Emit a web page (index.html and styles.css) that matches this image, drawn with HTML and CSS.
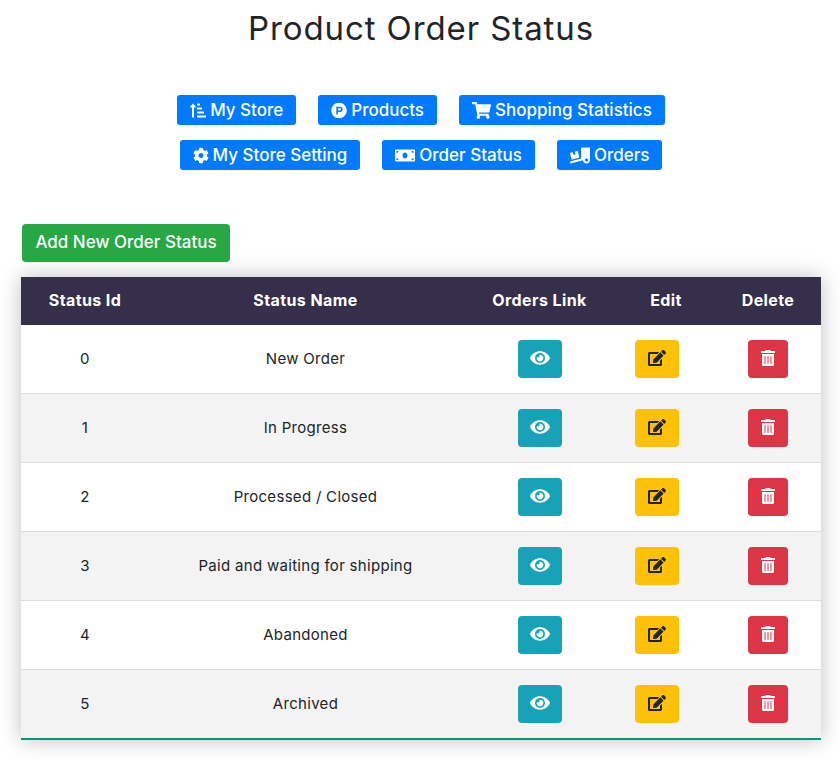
FILE: index.html
```html
<!DOCTYPE html>
<html lang="en">

<head>
    <meta charset="UTF-8">
    <meta name="viewport" content="width=device-width,initial-scale=1.0">
    <title>Product Order Status</title>
    <link rel="stylesheet" href="styles.css">
</head>

<body>
    <svg class="icon-defs" width="0" height="0">
        <symbol id="i-eye" viewBox="0 0 576 512"><path d="M572.52 241.4C518.29 135.59 410.93 64 288 64S57.68 135.64 3.48 241.41a32.35 32.35 0 0 0 0 29.19C57.71 376.41 165.07 448 288 448s230.32-71.64 284.52-177.41a32.35 32.35 0 0 0 0-29.19zM288 400a144 144 0 1 1 144-144 143.93 143.93 0 0 1-144 144zm0-240a95.31 95.31 0 0 0-25.31 3.79 47.85 47.85 0 0 1-66.9 66.9A95.78 95.78 0 1 0 288 160z"/></symbol>
        <symbol id="i-edit" viewBox="0 0 576 512"><path d="M402.6 83.2l90.2 90.2c3.8 3.8 3.8 10 0 13.8L274.4 405.6l-92.8 10.3c-12.4 1.4-22.9-9.1-21.5-21.5l10.3-92.8L388.8 83.2c3.8-3.8 10-3.8 13.8 0zm162-22.9l-48.8-48.8c-15.2-15.2-39.9-15.2-55.2 0l-35.4 35.4c-3.8 3.8-3.8 10 0 13.8l90.2 90.2c3.8 3.8 10 3.8 13.8 0l35.4-35.4c15.2-15.3 15.2-40 0-55.2zM384 346.2V448H64V128h229.8c3.2 0 6.2-1.3 8.5-3.5l40-40c7.6-7.6 2.2-20.5-8.5-20.5H48C21.5 64 0 85.5 0 112v352c0 26.5 21.5 48 48 48h352c26.5 0 48-21.5 48-48V306.2c0-10.7-12.9-16-20.5-8.5l-40 40c-2.2 2.3-3.5 5.3-3.5 8.5z"/></symbol>
        <symbol id="i-trash" viewBox="0 0 448 512"><path d="M32 464a48 48 0 0 0 48 48h288a48 48 0 0 0 48-48V128H32zm272-256a16 16 0 0 1 32 0v224a16 16 0 0 1-32 0zm-96 0a16 16 0 0 1 32 0v224a16 16 0 0 1-32 0zm-96 0a16 16 0 0 1 32 0v224a16 16 0 0 1-32 0zM432 32H312l-9.4-18.7A24 24 0 0 0 281.1 0H166.8a23.72 23.72 0 0 0-21.4 13.3L136 32H16A16 16 0 0 0 0 48v32a16 16 0 0 0 16 16h416a16 16 0 0 0 16-16V48a16 16 0 0 0-16-16z"/></symbol>
    </svg>

    <div class="page">
        <h1 class="page-title">Product Order Status</h1>

        <!-- Store menu -->
        <div class="store-menu">
            <div class="menu-row">
                <a class="menu-btn" href="#">
                    <svg class="menu-icon" viewBox="0 0 512 512"><path d="M240 96h64a16 16 0 0 0 16-16V48a16 16 0 0 0-16-16h-64a16 16 0 0 0-16 16v32a16 16 0 0 0 16 16zm0 128h128a16 16 0 0 0 16-16v-32a16 16 0 0 0-16-16H240a16 16 0 0 0-16 16v32a16 16 0 0 0 16 16zm256 192H240a16 16 0 0 0-16 16v32a16 16 0 0 0 16 16h256a16 16 0 0 0 16-16v-32a16 16 0 0 0-16-16zm-256-64h192a16 16 0 0 0 16-16v-32a16 16 0 0 0-16-16H240a16 16 0 0 0-16 16v32a16 16 0 0 0 16 16zM16 160h48v304a16 16 0 0 0 16 16h32a16 16 0 0 0 16-16V160h48c14.21 0 21.39-17.24 11.31-27.31l-80-96a16 16 0 0 0-22.62 0l-80 96C-5.35 142.74 1.77 160 16 160z"/></svg>
                    My Store
                </a>
                <a class="menu-btn" href="#">
                    <svg class="menu-icon" viewBox="0 0 512 512"><path d="M326.3 218.8c0 20.5-16.7 37.2-37.2 37.2h-70.3v-74.4h70.3c20.5 0 37.2 16.7 37.2 37.2zM504 256c0 137-111 248-248 248S8 393 8 256 119 8 256 8s248 111 248 248zm-128.1-37.2c0-47.9-38.9-86.8-86.8-86.8H169.2v248h49.6v-74.4h70.3c47.9 0 86.8-38.9 86.8-86.8z"/></svg>
                    Products
                </a>
                <a class="menu-btn" href="#">
                    <svg class="menu-icon cart-icon" viewBox="0 0 576 512"><path d="M528.12 301.319l47.273-208C578.806 78.301 567.391 64 551.99 64H159.208l-9.166-44.81C147.758 8.021 137.93 0 126.529 0H24C10.745 0 0 10.745 0 24v16c0 13.255 10.745 24 24 24h69.883l70.248 343.435C147.325 417.1 136 435.222 136 456c0 30.928 25.072 56 56 56s56-25.072 56-56c0-15.674-6.447-29.835-16.824-40h209.647C430.447 426.165 424 440.326 424 456c0 30.928 25.072 56 56 56s56-25.072 56-56c0-22.172-12.888-41.332-31.579-50.405l5.517-24.276c3.413-15.018-8.002-29.319-23.403-29.319H218.117l-6.545-32h293.145c11.206 0 20.92-7.754 23.403-18.681z"/></svg>
                    Shopping Statistics
                </a>
            </div>
            <div class="menu-row">
                <a class="menu-btn" href="#">
                    <svg class="menu-icon" viewBox="0 0 512 512"><path d="M487.4 315.7l-42.6-24.6c4.3-23.2 4.3-47 0-70.2l42.6-24.6c4.9-2.8 7.1-8.6 5.5-14-11.1-35.6-30-67.8-54.7-94.6-3.8-4.1-10-5.1-14.8-2.3L380.8 110c-17.9-15.4-38.5-27.3-60.8-35.1V25.8c0-5.6-3.9-10.5-9.4-11.7-36.7-8.2-74.3-7.8-109.2 0-5.5 1.2-9.4 6.1-9.4 11.7V75c-22.2 7.9-42.8 19.8-60.8 35.1L88.7 85.5c-4.9-2.8-11-1.9-14.8 2.3-24.7 26.7-43.6 58.9-54.7 94.6-1.7 5.4.6 11.2 5.5 14L67.3 221c-4.3 23.2-4.3 47 0 70.2l-42.6 24.6c-4.9 2.8-7.1 8.6-5.5 14 11.1 35.6 30 67.8 54.7 94.6 3.8 4.1 10 5.1 14.8 2.3l42.6-24.6c17.9 15.4 38.5 27.3 60.8 35.1v49.2c0 5.6 3.9 10.5 9.4 11.7 36.7 8.2 74.3 7.8 109.2 0 5.5-1.2 9.4-6.1 9.4-11.7v-49.2c22.2-7.9 42.8-19.8 60.8-35.1l42.6 24.6c4.9 2.8 11 1.9 14.8-2.3 24.7-26.7 43.6-58.9 54.7-94.6 1.5-5.5-.7-11.3-5.6-14.1zM256 336c-44.1 0-80-35.9-80-80s35.9-80 80-80 80 35.9 80 80-35.9 80-80 80z"/></svg>
                    My Store Setting
                </a>
                <a class="menu-btn" href="#">
                    <svg class="menu-icon wide-icon" viewBox="0 0 640 512"><path d="M608 64H32C14.33 64 0 78.33 0 96v320c0 17.67 14.33 32 32 32h576c17.67 0 32-14.33 32-32V96c0-17.67-14.33-32-32-32zM48 400v-64c35.35 0 64 28.65 64 64H48zm0-224v-64h64c0 35.35-28.65 64-64 64zm272 176c-44.19 0-80-42.99-80-96 0-53.02 35.82-96 80-96s80 42.98 80 96c0 53.03-35.83 96-80 96zm272 48h-64c0-35.35 28.65-64 64-64v64zm0-224c-35.35 0-64-28.65-64-64h64v64z"/></svg>
                    Order Status
                </a>
                <a class="menu-btn" href="#">
                    <svg class="menu-icon wide-icon" viewBox="0 0 640 512"><path d="M50.2 375.6c2.3 8.5 11.1 13.6 19.6 11.3l216.4-58c8.5-2.3 13.6-11.1 11.3-19.6l-49.7-185.5c-2.3-8.5-11.1-13.6-19.6-11.3L151 133.3l24.8 92.7-61.8 16.5-24.8-92.7-77.3 20.7C3.4 172.8-1.7 181.6.6 190.1l49.6 185.5zM384 0c-17.7 0-32 14.3-32 32v323.6L5.9 450c-4.3 1.2-6.8 5.6-5.6 9.8l12.6 46.3c1.2 4.3 5.6 6.8 9.8 5.6l393.7-107.4C418.8 464.1 467.6 512 528 512c61.9 0 112-50.1 112-112V0H384zm144 448c-26.5 0-48-21.5-48-48s21.5-48 48-48 48 21.5 48 48-21.5 48-48 48z"/></svg>
                    Orders
                </a>
            </div>
        </div>

        <a class="add-btn" href="#">Add New Order Status</a>

        <table class="status-table">
            <thead>
                <tr>
                    <th class="col-id">Status Id</th>
                    <th class="col-name">Status Name</th>
                    <th class="col-link">Orders Link</th>
                    <th class="col-edit">Edit</th>
                    <th class="col-delete">Delete</th>
                </tr>
            </thead>
            <tbody>
                <tr>
                    <td>0</td>
                    <td>New Order</td>
                    <td><a class="act-btn btn-view" href="#"><svg class="act-icon"><use href="#i-eye"/></svg></a></td>
                    <td><a class="act-btn btn-edit" href="#"><svg class="act-icon"><use href="#i-edit"/></svg></a></td>
                    <td><a class="act-btn btn-delete" href="#"><svg class="act-icon"><use href="#i-trash"/></svg></a></td>
                </tr>
                <tr>
                    <td>1</td>
                    <td>In Progress</td>
                    <td><a class="act-btn btn-view" href="#"><svg class="act-icon"><use href="#i-eye"/></svg></a></td>
                    <td><a class="act-btn btn-edit" href="#"><svg class="act-icon"><use href="#i-edit"/></svg></a></td>
                    <td><a class="act-btn btn-delete" href="#"><svg class="act-icon"><use href="#i-trash"/></svg></a></td>
                </tr>
                <tr>
                    <td>2</td>
                    <td>Processed / Closed</td>
                    <td><a class="act-btn btn-view" href="#"><svg class="act-icon"><use href="#i-eye"/></svg></a></td>
                    <td><a class="act-btn btn-edit" href="#"><svg class="act-icon"><use href="#i-edit"/></svg></a></td>
                    <td><a class="act-btn btn-delete" href="#"><svg class="act-icon"><use href="#i-trash"/></svg></a></td>
                </tr>
                <tr>
                    <td>3</td>
                    <td>Paid and waiting for shipping</td>
                    <td><a class="act-btn btn-view" href="#"><svg class="act-icon"><use href="#i-eye"/></svg></a></td>
                    <td><a class="act-btn btn-edit" href="#"><svg class="act-icon"><use href="#i-edit"/></svg></a></td>
                    <td><a class="act-btn btn-delete" href="#"><svg class="act-icon"><use href="#i-trash"/></svg></a></td>
                </tr>
                <tr>
                    <td>4</td>
                    <td>Abandoned</td>
                    <td><a class="act-btn btn-view" href="#"><svg class="act-icon"><use href="#i-eye"/></svg></a></td>
                    <td><a class="act-btn btn-edit" href="#"><svg class="act-icon"><use href="#i-edit"/></svg></a></td>
                    <td><a class="act-btn btn-delete" href="#"><svg class="act-icon"><use href="#i-trash"/></svg></a></td>
                </tr>
                <tr>
                    <td>5</td>
                    <td>Archived</td>
                    <td><a class="act-btn btn-view" href="#"><svg class="act-icon"><use href="#i-eye"/></svg></a></td>
                    <td><a class="act-btn btn-edit" href="#"><svg class="act-icon"><use href="#i-edit"/></svg></a></td>
                    <td><a class="act-btn btn-delete" href="#"><svg class="act-icon"><use href="#i-trash"/></svg></a></td>
                </tr>
            </tbody>
        </table>
    </div>
</body>

</html>
```

FILE: styles.css
```css
* {
    margin: 0;
    padding: 0;
    box-sizing: border-box;
}

html,
body {
    height: 100%;
    font-family: 'Inter', 'Open Sans', sans-serif;
    background-color: #fff;
    color: #212529;
    overflow: hidden;
}

.icon-defs {
    position: absolute;
}

.page {
    padding: 0 19px 0 21px;
}

.page-title {
    height: 95px;
    padding-top: 9px;
    font-size: 33px;
    line-height: 38px;
    font-weight: 400;
    letter-spacing: 0.9px;
    text-align: center;
}

/* Store menu */
.store-menu {
    display: flex;
    flex-direction: column;
    gap: 15px;
}

.menu-row {
    display: flex;
    justify-content: center;
    gap: 22px;
}

.menu-btn {
    display: flex;
    align-items: center;
    justify-content: center;
    gap: 4px;
    height: 30px;
    padding: 0 13px;
    background-color: #007bff;
    color: #fff;
    border-radius: 3px;
    font-size: 17px;
    font-weight: 500;
    text-decoration: none;
}

.menu-icon {
    width: 16px;
    height: 17px;
    fill: currentColor;
}

.cart-icon {
    width: 19px;
}

.wide-icon {
    width: 20px;
}

.add-btn {
    display: inline-block;
    margin: 54px 0 15px 1px;
    width: 208px;
    height: 38px;
    background-color: #28a745;
    color: #fff;
    border-radius: 4px;
    font-size: 17px;
    font-weight: 500;
    line-height: 37px;
    text-align: center;
    text-decoration: none;
}

/* Status table */
.status-table {
    width: 800px;
    table-layout: fixed;
    border-collapse: separate;
    border-spacing: 0;
    box-shadow: 0 0 20px rgba(0, 0, 0, 0.25);
    border-bottom: 2px solid #009879;
    font-size: 15px;
    letter-spacing: 0.3px;
    text-align: center;
}

.status-table th {
    height: 48px;
    padding-bottom: 2px;
    background-color: #352f4b;
    color: #fff;
    font-size: 16px;
    font-weight: 700;
    letter-spacing: 0.4px;
}

.col-id {
    width: 128px;
}

.col-name {
    width: 313px;
}

.col-link {
    width: 155px;
}

.col-edit {
    width: 98px;
}

.status-table td {
    height: 69px;
    border-bottom: 1px solid #ddd;
    vertical-align: middle;
}

/* id and name text sit a little above the middle of the row */
.status-table td:nth-child(-n+2) {
    padding-bottom: 2px;
}

.status-table tbody tr:nth-child(even) {
    background-color: #f3f3f3;
}

.status-table tbody tr:last-child td {
    height: 68px;
    border-bottom: none;
}

.act-btn {
    display: inline-flex;
    align-items: center;
    justify-content: center;
    width: 44px;
    height: 38px;
    padding-bottom: 2px;
    border-radius: 4px;
    vertical-align: middle;
}

.act-icon {
    width: 18px;
    height: 16px;
    fill: currentColor;
}

.btn-view {
    background-color: #17a2b8;
    color: #fff;
}

.btn-view .act-icon {
    width: 20px;
    height: 18px;
}

.btn-edit {
    margin-right: 18px;
    background-color: #ffc107;
    color: #212529;
}

.btn-delete {
    width: 40px;
    background-color: #dc3545;
    color: #fff;
}
```
